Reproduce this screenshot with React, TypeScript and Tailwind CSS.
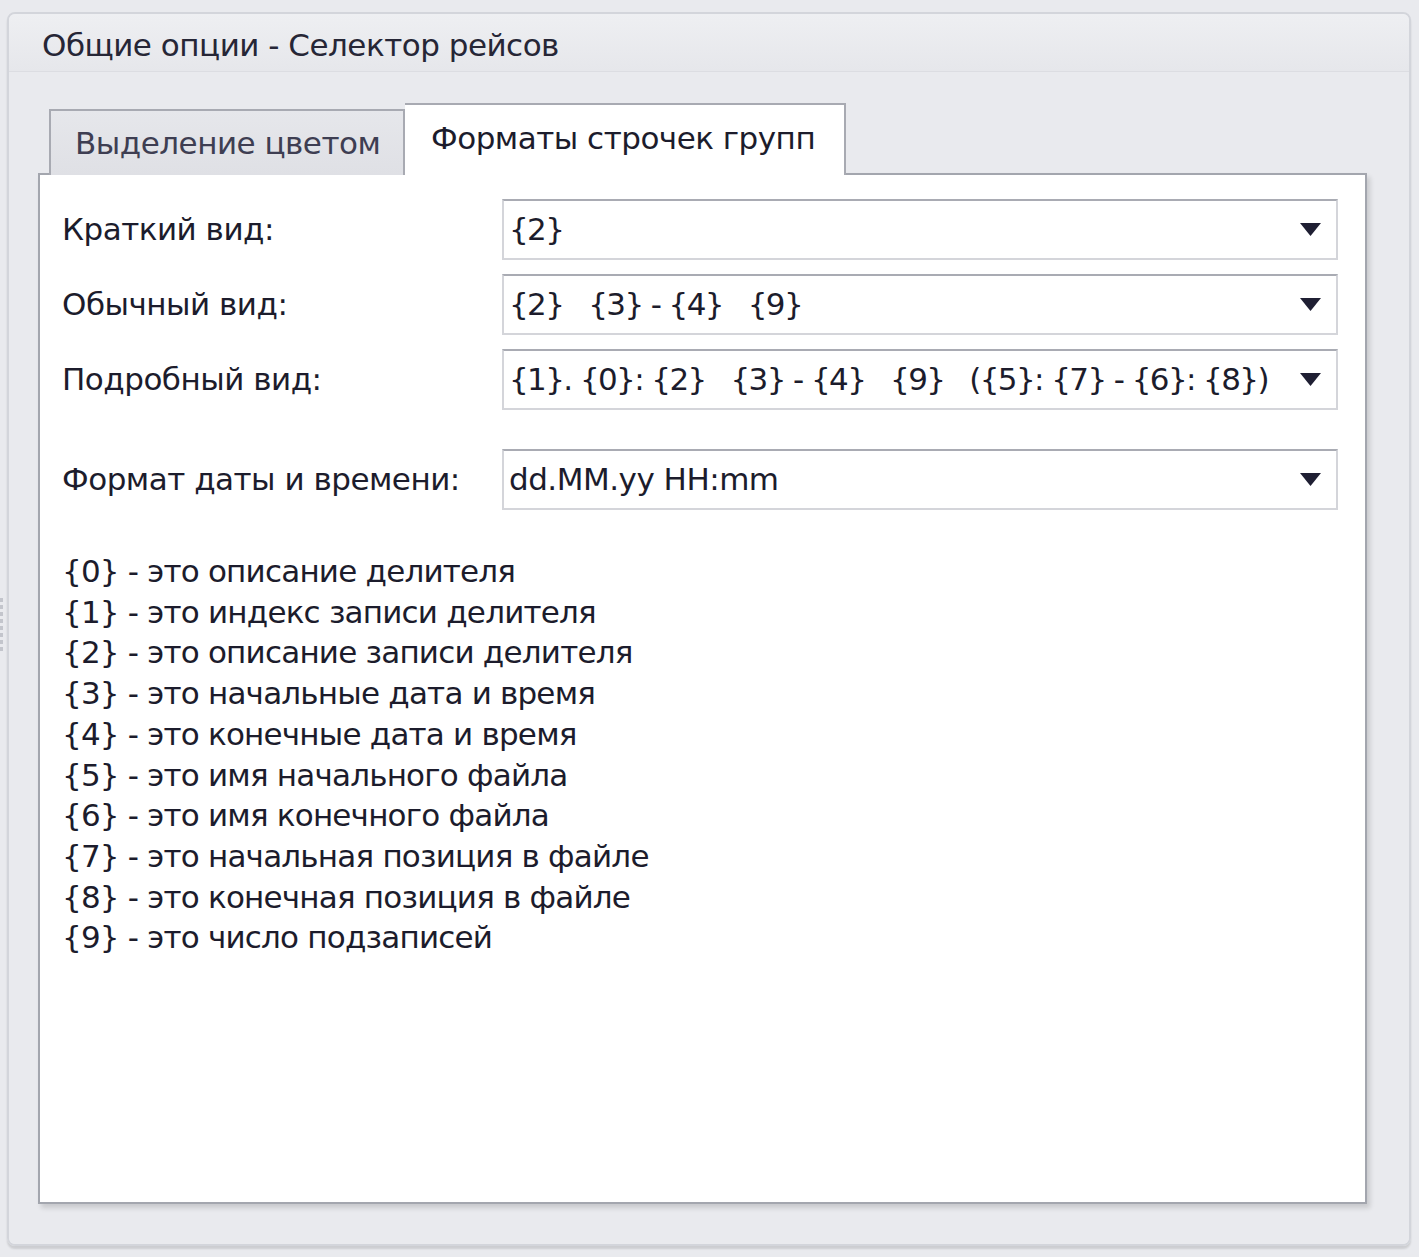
const font = "font-['DejaVu_Sans',sans-serif]";

function Combo({ value, tight }: { value: string; tight?: boolean }) {
  return (
    <div className="w-[836px] h-[61px] bg-white border-2 border-[#d4d5da] border-t-[#a9abb3] flex items-center pl-[5px] pr-[15px]">
      <span className={"flex-1 whitespace-pre text-[#1c1c2c] " + (tight ? "tracking-[-1.6px]" : "")}>{value}</span>
      <svg width="21" height="13" viewBox="0 0 21 13">
        <polygon points="0,0 21,0 10.5,13" fill="#1f1f33" />
      </svg>
    </div>
  );
}

function Row({ label, value, tight, className = "" }: { label: string; value: string; tight?: boolean; className?: string }) {
  return (
    <div className={"flex items-center " + className}>
      <div className="w-[440px] text-[#1c1c2c]">{label}</div>
      <Combo value={value} tight={tight} />
    </div>
  );
}

const legend = [
  "{0} - это описание делителя",
  "{1} - это индекс записи делителя",
  "{2} - это описание записи делителя",
  "{3} - это начальные дата и время",
  "{4} - это конечные дата и время",
  "{5} - это имя начального файла",
  "{6} - это имя конечного файла",
  "{7} - это начальная позиция в файле",
  "{8} - это конечная позиция в файле",
  "{9} - это число подзаписей",
];

export default function App() {
  return (
    <div className={"w-[1419px] h-[1257px] bg-[#e9eaee] flex text-[31px] tracking-[-0.5px] " + font}>
      {/* Splitter grip */}
      <div className="w-[7px] pt-[598px]">
        <div className="w-[3px] flex flex-col gap-[3px]">
          {[0, 1, 2, 3, 4, 5, 6, 7].map((i) => (
            <div key={i} className="h-[4px] bg-[#c3c5cc]" />
          ))}
        </div>
      </div>
      {/* Group box */}
      <div className="mt-[12px] w-[1404px] h-[1234px] rounded-[8px] border-2 border-[#d3d5db] shadow-[0_3px_2px_rgba(0,0,0,0.12)] flex flex-col overflow-hidden">
        <div className="h-[58px] bg-gradient-to-b from-[#eeeff2] to-[#e6e7eb] border-b border-[#dcdde2] pl-[33px] pt-[5px] flex items-center text-[#262636]">
          Общие опции - Селектор рейсов
        </div>
        <div className="flex-1 bg-[#e9eaee] pl-[29px] pt-[29px]">
          {/* Tabs */}
          <div className="flex items-end pl-[11px] h-[72px]">
            <div className="w-[356px] h-[66px] border-2 border-b-0 border-[#a8aab2] bg-gradient-to-b from-[#e6e7eb] to-[#dfe0e5] flex items-center pl-[24px] text-[#3e3e52] mb-[-2px]">
              Выделение цветом
            </div>
            <div className="w-[441px] h-[72px] border-2 border-b-0 border-l-0 border-[#a8aab2] bg-white flex items-center pl-[26px] text-[#1c1c2c] relative z-10 mb-[-2px] pb-[4px]">
              Форматы строчек групп
            </div>
          </div>
          {/* Tab page */}
          <div className="w-[1329px] h-[1031px] bg-white border-2 border-[#a3a6ae] shadow-[3px_4px_5px_rgba(0,0,0,0.14)] pt-[24px] pl-[22px]">
            <div className="flex flex-col gap-[14px]">
              <Row label="Краткий вид:" value="{2}" tight />
              <Row label="Обычный вид:" value="{2}   {3} - {4}   {9}" tight />
              <Row label="Подробный вид:" value="{1}. {0}: {2}   {3} - {4}   {9}   ({5}: {7} - {6}: {8})" tight />
            </div>
            <Row className="mt-[39px]" label="Формат даты и времени:" value="dd.MM.yy HH:mm" />
            <div className="mt-[41px] leading-[40.7px] tracking-[-0.8px] text-[#1c1c2c]">
              {legend.map((l) => (
                <div key={l}>{l}</div>
              ))}
            </div>
          </div>
        </div>
      </div>
    </div>
  );
}
